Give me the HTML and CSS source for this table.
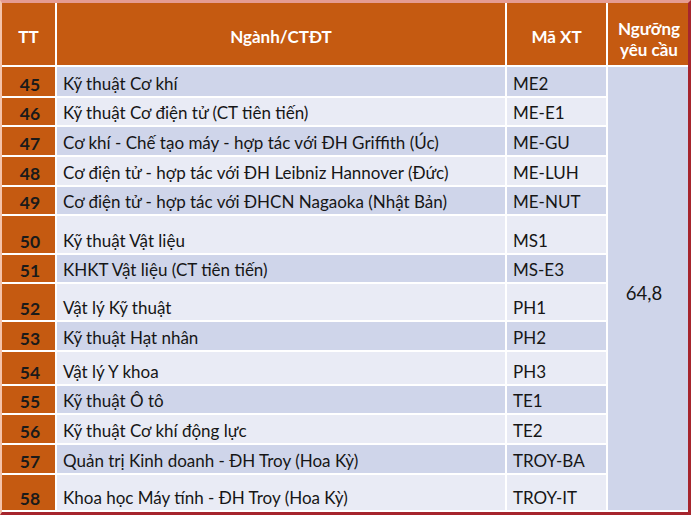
FILE: index.html
```html
<!DOCTYPE html>
<html lang="vi">
<head>
<meta charset="utf-8">
<title>Ngưỡng yêu cầu</title>
<link rel="stylesheet" href="styles.css">
</head>
<body>
<div class="frame">
  <div class="grid">
    <div class="hd">TT</div>
    <div class="hd">Ngành/CTĐT</div>
    <div class="hd">Mã XT</div>
    <div class="hd hd-last">Ngưỡng<br>yêu cầu</div>

    <div class="score">64,8</div>

    <div class="tt">45</div><div class="name dark">Kỹ thuật Cơ khí</div><div class="code dark">ME2</div>
    <div class="tt">46</div><div class="name light">Kỹ thuật Cơ điện tử (CT tiên tiến)</div><div class="code light">ME-E1</div>
    <div class="tt">47</div><div class="name dark">Cơ khí - Chế tạo máy - hợp tác với ĐH Griffith (Úc)</div><div class="code dark">ME-GU</div>
    <div class="tt">48</div><div class="name light">Cơ điện tử - hợp tác với ĐH Leibniz Hannover (Đức)</div><div class="code light">ME-LUH</div>
    <div class="tt">49</div><div class="name dark">Cơ điện tử - hợp tác với ĐHCN Nagaoka (Nhật Bản)</div><div class="code dark">ME-NUT</div>
    <div class="tt">50</div><div class="name light">Kỹ thuật Vật liệu</div><div class="code light">MS1</div>
    <div class="tt">51</div><div class="name dark">KHKT Vật liệu (CT tiên tiến)</div><div class="code dark">MS-E3</div>
    <div class="tt">52</div><div class="name light">Vật lý Kỹ thuật</div><div class="code light">PH1</div>
    <div class="tt">53</div><div class="name dark">Kỹ thuật Hạt nhân</div><div class="code dark">PH2</div>
    <div class="tt">54</div><div class="name light">Vật lý Y khoa</div><div class="code light">PH3</div>
    <div class="tt">55</div><div class="name dark">Kỹ thuật Ô tô</div><div class="code dark">TE1</div>
    <div class="tt">56</div><div class="name light">Kỹ thuật Cơ khí động lực</div><div class="code light">TE2</div>
    <div class="tt">57</div><div class="name dark">Quản trị Kinh doanh - ĐH Troy (Hoa Kỳ)</div><div class="code dark">TROY-BA</div>
    <div class="tt">58</div><div class="name light">Khoa học Máy tính - ĐH Troy (Hoa Kỳ)</div><div class="code light">TROY-IT</div>
  </div>
</div>
</body>
</html>
```

FILE: styles.css
```css
html, body {
  margin: 0;
  padding: 0;
  background: #ffffff;
}

body {
  font-family: Lato, "Noto Sans", "DejaVu Sans", sans-serif;
  color: #161616;
}

.frame {
  width: 691px;
  height: 515px;
  box-sizing: border-box;
  border-top: 3px solid #e59c92;
  border-left: 2px solid #f5c3aa;
  border-right: 3px solid #a6252d;
  border-bottom: 3px solid #a6252d;
  padding-bottom: 2px;
  background: #ffffff;
}

.grid {
  display: grid;
  grid-template-columns: 53px 448px 99px 80px;
  grid-template-rows: 62px 29px 27px 28px 28px 27px 37px 27px 36px 28px 32px 27px 28px 28px 35px;
  gap: 2px;
  background: #ffffff;
}

.hd {
  background: #c55a11;
  color: #ffffff;
  font-weight: 700;
  font-size: 17px;
  display: flex;
  align-items: center;
  justify-content: center;
  text-align: center;
  padding-top: 5px;
  box-sizing: border-box;
}

.hd-last {
  font-size: 17px;
  line-height: 21px;
  padding-top: 10px;
  padding-left: 2px;
}

.tt {
  background: #c55a11;
  color: #1a1a1a;
  font-weight: 700;
  font-size: 17.5px;
  display: flex;
  align-items: flex-end;
  justify-content: center;
  padding-bottom: 1px;
  padding-left: 3px;
  box-sizing: border-box;
  line-height: 1.2;
}

.name,
.code {
  font-size: 17px;
  display: flex;
  align-items: flex-end;
  padding-bottom: 2px;
  box-sizing: border-box;
  line-height: 1.2;
  white-space: nowrap;
}

.name {
  padding-left: 6px;
}

.code {
  padding-left: 6px;
}

.dark {
  background: #cfd5ea;
}

.light {
  background: #e9ebf5;
}

.score {
  grid-column: 4;
  grid-row: 2 / span 14;
  background: #cfd5ea;
  font-size: 18.5px;
  display: flex;
  align-items: center;
  justify-content: center;
  padding-top: 8px;
  padding-right: 8px;
  box-sizing: border-box;
}
```
